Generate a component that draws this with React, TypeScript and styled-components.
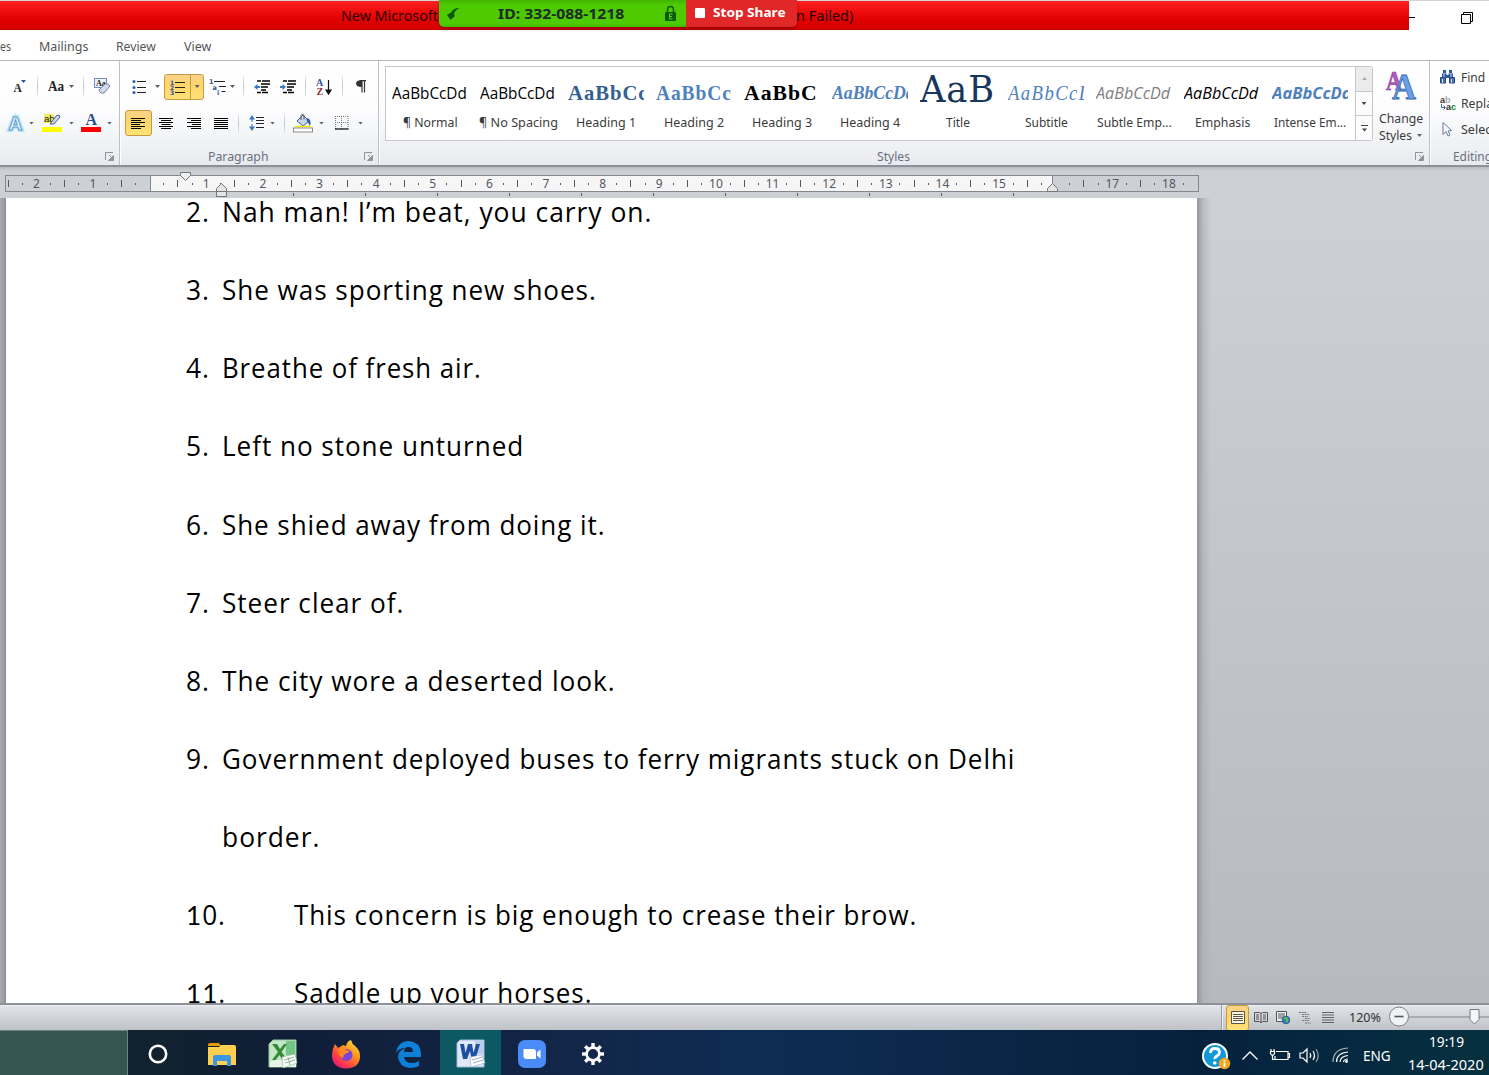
import React, { useLayoutEffect, useRef, useState } from "react";
import styled, { createGlobalStyle, css } from "styled-components";

const UI = '"Noto Sans", "Open Sans", sans-serif';
const BODY = '"Open Sans", "Noto Sans", sans-serif';
const SERIF = '"DejaVu Serif", "Liberation Serif", serif';
const BOOK_SERIF = '"Liberation Serif", "DejaVu Serif", serif';

const Global = createGlobalStyle`
  * { box-sizing: border-box; }
  body { margin: 0; overflow: hidden; background: #fff; font-family: ${UI}; font-size: 12.5px; color: #3b3b3b; }
  svg { display: block; overflow: visible; flex: none; }
`;

/* Text condensed or widened to an exact measure */
const FitBox = styled.span<{ $w: number }>`
  display: inline-block;
  flex: none;
  width: ${(p) => p.$w}px;
  white-space: pre;
`;
const FitInner = styled.span`
  display: inline-block;
  transform-origin: 0 50%;
`;
function Fit({ w, children }: { w: number; children: React.ReactNode }) {
  const ref = useRef<HTMLSpanElement>(null);
  const [k, setK] = useState(1);
  useLayoutEffect(() => {
    if (ref.current) setK(w / ref.current.offsetWidth);
  }, [w]);
  return (
    <FitBox $w={w}>
      <FitInner ref={ref} style={{ transform: `scaleX(${k})` }}>{children}</FitInner>
    </FitBox>
  );
}

const Screen = styled.div`
  position: relative;
  width: 1489px;
  height: 1075px;
  display: flex;
  flex-direction: column;
  overflow: hidden;
`;

/* ---------- title bar ---------- */
const TitleRow = styled.header`
  height: 30px;
  flex: none;
  display: flex;
  border-top: 1px solid #d4d4d4;
`;
const RedTitle = styled.div`
  width: 1409px;
  height: 29px;
  display: flex;
  align-items: center;
  padding: 2px 0 0 341px;
  background: linear-gradient(#ff2020, #ea0a0a 45%, #dc0000 75%, #d80000);
  border-bottom: 1px solid #c00000;
  color: #2c0000;
  font-size: 14px;
  line-height: 26px;
`;
const TitleGap = styled.span`
  width: 358px;
`;
const WindowButtons = styled.div`
  display: flex;
  align-items: flex-start;
  padding-top: 10px;
  gap: 46px;
`;
const ShareBar = styled.div`
  position: absolute;
  left: 439px;
  top: 0;
  height: 27px;
  display: flex;
  border-radius: 0 0 5px 5px;
  overflow: hidden;
  font-weight: 700;
  box-shadow: 0 2px 3px rgba(60, 0, 0, 0.4);
`;
const MeetingId = styled.div`
  width: 247px;
  display: flex;
  align-items: center;
  padding-left: 8px;
  background: linear-gradient(#42b400, #4dca00 5px, #4dca00 24px, #42b400);
  color: #1d2b2b;
  font-size: 13.5px;
`;
const IdText = styled.div`
  margin-left: 38px;
  width: 167px;
`;
const StopShare = styled.div`
  width: 111px;
  display: flex;
  align-items: center;
  gap: 8px;
  padding: 0 0 2px 9px;
  background: #e02828;
  color: #fff;
  font-size: 12.5px;
`;
const StopSquare = styled.i`
  width: 10px;
  height: 10px;
  border-radius: 1px;
  background: #fff;
`;

/* ---------- ribbon ---------- */
const Tabs = styled.nav`
  height: 31px;
  flex: none;
  display: flex;
  align-items: center;
  padding-top: 2px;
  border-bottom: 1px solid #b4b7bc;
  color: #555;
`;
const Space = styled.i<{ $w: number }>`
  width: ${(p) => p.$w}px;
  flex: none;
`;
const Ribbon = styled.div`
  height: 106px;
  flex: none;
  display: flex;
  background: linear-gradient(#fff, #fdfdfe 45%, #f3f5f7 70%, #e8eaef);
  border-bottom: 2px solid #8c9098;
`;
const Group = styled.section<{ $w: number }>`
  width: ${(p) => p.$w}px;
  flex: none;
  display: flex;
  flex-direction: column;
  border-right: 1px solid #bcc0c7;
  box-shadow: 1px 0 0 #fff;
  overflow: hidden;
`;
const ToolRow = styled.div<{ $h: number }>`
  height: ${(p) => p.$h}px;
  flex: none;
  display: flex;
  align-items: center;
`;
const Cell = styled.span<{ $w: number; $ml?: number }>`
  width: ${(p) => p.$w}px;
  margin-left: ${(p) => p.$ml ?? 0}px;
  flex: none;
  display: flex;
  justify-content: center;
`;
const Divider = styled.i<{ $ml: number }>`
  width: 1px;
  height: 21px;
  flex: none;
  margin-left: ${(p) => p.$ml}px;
  background: linear-gradient(#ececee, #bfc3c9, #ececee);
`;
const Caret = styled.i<{ $ml?: number; $c?: string }>`
  flex: none;
  width: 5px;
  height: 3px;
  margin-left: ${(p) => p.$ml ?? 0}px;
  background: ${(p) => p.$c ?? "#606060"};
  clip-path: polygon(0 0, 100% 0, 50% 100%);
`;
const Hot = styled.span<{ $w: number; $ml: number }>`
  width: ${(p) => p.$w}px;
  height: 26px;
  margin-left: ${(p) => p.$ml}px;
  flex: none;
  display: flex;
  align-items: center;
  justify-content: center;
  border: 1px solid #c79a3c;
  border-radius: 3px;
  background: linear-gradient(#f9d38b, #fdd668 45%, #ffe27a);
`;
const HotHalf = styled.span<{ $w: number }>`
  width: ${(p) => p.$w}px;
  height: 24px;
  display: flex;
  align-items: center;
  justify-content: center;
  & + & { border-left: 1px solid #c79a3c; }
`;
const GroupFoot = styled.footer`
  height: 20px;
  flex: none;
  display: flex;
  align-items: center;
  padding-top: 2px;
  color: #6a7080;
`;

/* ---------- styles gallery ---------- */
const GalleryRow = styled.div`
  height: 84px;
  flex: none;
  display: flex;
  padding: 5px 0 0 6px;
`;
const Gallery = styled.div`
  width: 971px;
  height: 75px;
  display: flex;
  border: 1px solid #c4c7cc;
  background: #fff;
`;
const StyleCard = styled.div`
  width: 88px;
  flex: none;
  display: flex;
  flex-direction: column;
  align-items: center;
`;
const Preview = styled.div<{ $css: ReturnType<typeof css> }>`
  width: 76px;
  height: 36px;
  margin-top: 8px;
  overflow: hidden;
  white-space: nowrap;
  line-height: 36px;
  ${(p) => p.$css}
`;
const CardName = styled.div`
  height: 22px;
  margin-top: 1px;
  line-height: 22px;
`;
const GalleryScroll = styled.div`
  width: 17px;
  height: 75px;
  display: flex;
  flex-direction: column;
  border: 1px solid #c4c7cc;
  border-left: 0;
  border-radius: 0 3px 3px 0;
`;
const ScrollButton = styled.span<{ $off?: boolean }>`
  flex: 1;
  display: flex;
  align-items: center;
  justify-content: center;
  background: ${(p) => (p.$off ? "#ececec" : "#fcfcfd")};
  & + & { border-top: 1px solid #c4c7cc; }
`;
const ChangeStyles = styled.div`
  width: 55px;
  display: flex;
  flex-direction: column;
  align-items: center;
  padding-top: 5px;
  line-height: 17px;
`;
const ChangeLabel = styled.div`
  padding-top: 9px;
`;
const Inline = styled.span`
  display: flex;
  align-items: center;
`;
const EditList = styled.div`
  height: 84px;
  flex: none;
  padding-top: 3px;
`;
const EditRow = styled.div`
  height: 26px;
  display: flex;
  align-items: center;
  padding-left: 10px;
`;

/* ---------- ruler ---------- */
const RulerBand = styled.div`
  position: relative;
  height: 31px;
  flex: none;
  padding: 8px 0 0 5px;
  background: linear-gradient(#b9bdc3, #cdd0d5 4px);
`;
const Ruler = styled.div`
  width: 1194px;
  height: 17px;
  display: flex;
  align-items: center;
  border: 1px solid #83878f;
  background: linear-gradient(90deg, #cdd0d5 144px, #83878f 144px 145px, #f6f6f7 145px 1046px, #83878f 1046px 1047px, #cdd0d5 1047px);
  color: #55585e;
  font-size: 12px;
`;
const Slot = styled.span`
  width: 14.17px;
  flex: none;
  display: flex;
  justify-content: center;
  white-space: nowrap;
  &:first-child { margin-left: -5px; }
`;
const Tick = styled.i<{ $h: number }>`
  width: 1px;
  height: ${(p) => p.$h}px;
  background: #55585e;
`;
const Num = styled.span`
  width: 0;
  display: flex;
  justify-content: center;
  line-height: 14px;
`;
const TabStops = styled.div`
  display: flex;
  gap: 71px;
  padding: 1px 0 0 288px;
`;
const Marker = styled.span<{ $x: number; $y: number }>`
  position: absolute;
  left: ${(p) => p.$x}px;
  top: ${(p) => p.$y}px;
`;

/* ---------- document ---------- */
const Canvas = styled.main`
  height: 805px;
  flex: none;
  display: flex;
  background: linear-gradient(#cdd0d5, #b6b9be);
`;
const LeftEdge = styled.div`
  width: 6px;
  background: linear-gradient(90deg, #a7aaaf, #9b9ea4 4px, #85888e);
`;
const Page = styled.article`
  width: 1191px;
  height: 805px;
  overflow: hidden;
  background: #fff;
  padding-left: 180px;
  color: #000;
  font: 27.5px ${BODY};
  letter-spacing: 1px;
`;
const RightEdge = styled.div`
  width: 14px;
  background: linear-gradient(90deg, #93969d, rgba(170, 173, 178, 0.6) 6px, transparent);
`;
const Line = styled.div`
  height: 78.12px;
  line-height: 78.12px;
  display: flex;
  &:first-child { margin-top: -24.9px; }
`;
const LineNo = styled.span<{ $w: number }>`
  width: ${(p) => p.$w}px;
  flex: none;
`;
const FootedOne = styled.span`
  font-family: Lato, ${BODY};
`;

/* ---------- status bar ---------- */
const Status = styled.div`
  height: 27px;
  flex: none;
  display: flex;
  align-items: center;
  padding-left: 1221px;
  border-top: 2px solid #8d919a;
  background: linear-gradient(#eceff2, #dfe2e6 2px, #bfc2c7);
  color: #333;
`;
const StatusSep = styled.i`
  width: 2px;
  height: 25px;
  background: #9a9da3;
  border-right: 1px solid #eee;
`;

/* ---------- taskbar ---------- */
const Taskbar = styled.div`
  height: 45px;
  flex: none;
  display: flex;
  align-items: center;
  background: linear-gradient(90deg, #11222e 128px, #101e38 300px, #12274a 600px, #0e2c54 760px, #0a2646 1000px, #06213c 1200px, #052a40 1370px, #06303e);
  color: #fff;
`;
const SearchBlock = styled.div`
  width: 128px;
  height: 45px;
  border: solid #6b8582;
  border-width: 1px 1px 0 0;
  background: #345551;
`;
const TaskButton = styled.div<{ $w: number; $on?: boolean }>`
  width: ${(p) => p.$w}px;
  height: 45px;
  padding-top: 3px;
  display: flex;
  align-items: center;
  justify-content: center;
  background: ${(p) => (p.$on ? "#0c5863" : "transparent")};
`;
const Tray = styled.div`
  margin-left: auto;
  height: 45px;
  display: flex;
  align-items: center;
  padding-top: 5px;
  font-size: 14.5px;
`;
const Clock = styled.div`
  display: flex;
  flex-direction: column;
  align-items: center;
  width: 86px;
  height: 46px;
  margin: -4px 0 0 1px;
  line-height: 23px;
`;

/* ---------- small drawings ---------- */
const Launcher = () => (
  <svg width="9" height="9" fill="none" stroke="#8f939a">
    <path d="M.5 8V.5H8M4 3l3 3" />
    <path d="M3.5 8.5h5v-5z" fill="#8f939a" />
  </svg>
);
const Lines = ({ a }: { a: "l" | "c" | "r" | "j" }) => (
  <svg width="15" height="13" stroke="#000">
    {[14, 10, 14, 9, 14, 10].map((w0, i) => {
      const w = a === "j" ? 14 : w0;
      const x = a === "r" ? 14 - w : a === "c" ? (14 - w) / 2 : 0;
      return <path key={i} d={`M${x} ${i * 2 + 1.5}h${w}`} strokeWidth="1" />;
    })}
  </svg>
);
const Bullets = () => (
  <svg width="14" height="14">
    {[1.5, 7.5, 12.5].map((y) => (
      <g key={y}>
        <circle cx="2" cy={y} r="1.500" fill="#2f5bb0" />
        <path d={`M5 ${y}h9`} stroke="#222" />
      </g>
    ))}
  </svg>
);
const Numbering = () => (
  <svg width="15" height="14" fontFamily="DejaVu Sans, sans-serif" fontSize="6" fontWeight="700" fill="#2c50a0">
    {[1, 2, 3].map((n) => (
      <g key={n}>
        <text x="0" y={n * 5 - 0.5}>{n}</text>
        <path d={`M5 ${n * 5 - 2.5}h10`} stroke="#222" />
      </g>
    ))}
  </svg>
);
const Multi = () => (
  <svg width="17" height="16" fontFamily="DejaVu Sans, sans-serif" fontSize="6.500" fontWeight="700" fill="#2c50a0">
    <text x="0" y="5">1</text>
    <text x="3.500" y="10.500">a</text>
    <text x="8" y="16">i</text>
    <path d="M5 2.500h11M10 7.500h7M12.500 12.500h4" stroke="#222" />
  </svg>
);
const Indent = ({ out }: { out?: boolean }) => (
  <svg width="17" height="14">
    <path d="M3 1h4M8 1h8M7 4h9M7 7h7M7 10h5M3 12.500h4M8 12.500h6" stroke="#000" strokeWidth="1.700" />
    <path d={out ? "M0 7l3.500-3v2H6v2H3.500v2z" : "M6 7L2.500 4v2H0v2h2.500v2z"} fill="#3d78c8" />
  </svg>
);
const Sort = () => (
  <svg width="16" height="16" fontFamily="Liberation Serif, serif" fontSize="10" fontWeight="700">
    <text x="0" y="7" fill="#2c55a8">A</text>
    <text x="0.500" y="15.500" fill="#8c2f2f">Z</text>
    <path d="M12.500 1v13M10 11l2.500 4 2.500-4z" stroke="#111" strokeWidth="1.200" fill="#111" />
  </svg>
);
const Spacing = () => (
  <svg width="16" height="16">
    <path d="M3 3v10" stroke="#2f66b8" strokeDasharray="4 2" />
    <path d="M0 4.500L3 0l3 4.500zM0 11.500L3 16l3-4.500z" fill="#3d78c8" />
    <path d="M7 2.500h8M7 5.500h8M7 8.500h8M7 12.500h8" stroke="#222" />
  </svg>
);
const Shading = () => (
  <svg width="20" height="18">
    <path d="M4 7l6-6 6 6-6 5z" fill="#c9d6ea" stroke="#40608f" />
    <path d="M8 6V1.500q1.500-3 3 0v4" fill="none" stroke="#555" />
    <path d="M13 4q6 0 4 8l-3-5z" fill="#2b5fae" />
    <path d="M2 12.500h16" stroke="#f6ef00" strokeWidth="1.500" />
    <rect x=".5" y="14" width="19" height="4" fill="#fff" stroke="#8a8a8a" />
  </svg>
);
const Borders = () => (
  <svg width="14" height="14">
    <path d="M.5 0v13M13 0v13M6.500 0v13M0 .5h14M0 6.500h14" stroke="#777" strokeDasharray="1 1" />
    <path d="M0 13h13.500" stroke="#111" strokeWidth="1.300" />
  </svg>
);
const ShrinkFont = () => (
  <svg width="14" height="15" fontFamily="Liberation Serif, serif" fontWeight="700">
    <text x="0.500" y="13" fontSize="11.500" fill="#222">A</text>
    <path d="M8 1h5l-2.500 3z" fill="#2c55a8" />
  </svg>
);
const CaseText = styled.span`
  font: 700 14px "Liberation Serif", serif;
  color: #222;
`;
const ClearFmt = () => (
  <svg width="17" height="17">
    <rect x=".5" y=".5" width="12" height="9" fill="#eef3fb" stroke="#6f8fc0" />
    <text x="2" y="8" fontFamily="Liberation Serif, serif" fontWeight="700" fontSize="8" fill="#222">Aa</text>
    <path d="M5 12l6-6q3-1 5 2l-6 7q-4 1-5-3z" fill="#d4dcec" stroke="#6b80a8" />
  </svg>
);
const OutlineA = () => (
  <svg width="17" height="17" fontFamily="Liberation Sans, sans-serif" fontWeight="700">
    <text x="1.500" y="14.500" fontSize="19" fill="#fff" stroke="#b4e2f6" strokeWidth="4">A</text>
    <text x="1.500" y="14.500" fontSize="19" fill="#fff" stroke="#5c9bd0" strokeWidth="1">A</text>
  </svg>
);
const Highlight = () => (
  <svg width="20" height="18">
    <rect x="2" y="0" width="10" height="9" fill="#f1ee6a" />
    <text x="2" y="8" fontFamily="Liberation Sans, sans-serif" fontSize="9.500" fill="#111">ab</text>
    <path d="M8 10l6-8 3-1 1 2-6 7z" fill="#c8d3e8" stroke="#51658d" />
    <rect y="13" width="20" height="5" fill="#ff0" />
  </svg>
);
const FontColor = () => (
  <svg width="20" height="18">
    <text x="4.500" y="11" fontFamily="Liberation Serif, serif" fontWeight="700" fontSize="16" fill="#294f91">A</text>
    <rect y="13" width="20" height="5" fill="#f00" />
  </svg>
);
const BigAA = () => (
  <svg width="30" height="30" fontFamily="Liberation Serif, serif" fontWeight="700">
    <text x="0" y="19" fontSize="28" textLength="16" lengthAdjust="spacingAndGlyphs" fill="#b25fc4" stroke="#8b3c9c" strokeWidth=".7">A</text>
    <text x="6" y="28" fontSize="36" textLength="24" lengthAdjust="spacingAndGlyphs" fill="#6a9fe8" stroke="#3767b0" strokeWidth=".8">A</text>
  </svg>
);
const Binoculars = () => (
  <svg width="15" height="14" fill="#2d5796">
    <path d="M3 0h3v3H3zM9 0h3v3H9zM2 3.500h4.500v4H2zM8.500 3.500H13v4H8.500zM6 5h3v3H6z" />
    <path d="M.5 7.500h5v5.500h-5zM9.500 7.500h5v5.500h-5z" fill="#456fae" stroke="#234680" />
    <path d="M2.500 9v4M11.500 9v4M4 4v3M11 4v3" stroke="#c9dcf5" />
  </svg>
);
const ReplaceIcon = () => (
  <svg width="16" height="15" fontFamily="Liberation Sans, sans-serif" fontWeight="700" fontSize="9">
    <text x="0" y="7" fill="#333">a<tspan fill="#aaa">b</tspan></text>
    <text x="6" y="14" fill="#333">a<tspan fill="#178a28">c</tspan></text>
    <path d="M1.500 8v3.500h4M3.500 9.500l2 2-2 2" fill="none" stroke="#3568b4" />
  </svg>
);
const Cursor = () => (
  <svg width="10" height="15">
    <path d="M1 .5v12l3-3 2 4.500 2-1-2-4 3.500-.5z" fill="#fff" stroke="#62779b" />
  </svg>
);
const ArrowMark = () => (
  <svg width="13" height="12">
    <path d="M12.500 0Q6 0 4.500 4L0 7l3.500 5L8 8l-1-2q1-4 5.500-6z" fill="#0c5b0c" />
  </svg>
);
const Lock = () => (
  <svg width="11" height="15">
    <path d="M2.500 7V4q0-3.500 3-3.500t3 3.500v3" fill="none" stroke="#0c5b0c" strokeWidth="1.500" />
    <rect y="6" width="11" height="9" rx="1" fill="#0c5b0c" />
    <path d="M7.500 8h-3v5h3M4.500 10.500H7" fill="none" stroke="#5bd41a" />
  </svg>
);

const Down = () => (
  <svg width="11" height="9"><path d="M.5.5h10v3L5.500 8.500l-5-5z" fill="#eee" stroke="#777" /></svg>
);
const Up = ({ base }: { base?: boolean }) => (
  <svg width="11" height="15" fill="#e4e4e4" stroke="#777">
    <path d="M.5 8.500V5.500l5-5 5 5v3z" />
    {base && <rect x=".5" y="8.500" width="10" height="5" />}
  </svg>
);

const ViewIcon = ({ kind }: { kind: "page" | "book" | "web" | "outline" | "draft" }) => (
  <svg width="14" height="13" fill="none" stroke="#555">
    {kind === "page" && <path d="M.5.5h13v12H.5zM2 3.500h10M2 5.500h10M2 7.500h10M2 9.500h10" fill="#fff8d8" />}
    {kind === "book" && <path d="M.5 1.500h5l1.500 1 1.500-1h5v9h-5L7 12l-1.500-1.500h-5zM7 2v10M2 4h3M2 6h3M2 8h3M9 4h3M9 6h3M9 8h3" />}
    {kind === "web" && (
      <>
        <path d="M.5.5h10v10H.5zM2 3h7M2 5h7M2 7h5" fill="#eee" />
        <circle cx="10" cy="9" r="3.800" fill="#2f7bbd" stroke="#2b6196" />
        <path d="M8 8q2-2 3 0t-1 3" stroke="#63c04b" strokeWidth="2" />
      </>
    )}
    {kind === "outline" && <path d="M1 1.500h8M4 3.500h7M4 5.500h6M7 7.500h5M4 9.500h7M7 12h6" stroke="#777" strokeDasharray="2 .6" />}
    {kind === "draft" && <path d="M1 1.500h12M1 4h12M1 6.500h12M1 9h12M1 11.500h12" stroke="#666" />}
  </svg>
);

/* ---------- taskbar drawings ---------- */
const Folder = () => (
  <svg width="28" height="23">
    <path d="M0 2q0-2 2-2h9l2 3H0z" fill="#e39b08" />
    <path d="M0 4h11l2-2h13q2 0 2 2v18H0z" fill="#ffcf50" />
    <path d="M5 23V14q0-2 2-2h14q2 0 2 2v9h-4v-5H9v5z" fill="#3b96df" />
  </svg>
);
const Excel = () => (
  <svg width="28" height="28">
    <path d="M4 0h23v27H0V4z" fill="#c3e6c8" stroke="#8ecb96" />
    <path d="M17 1h9v14h-9z" fill="#71c585" />
    <path d="M1 21L10 20l17 2v5H1z" fill="#e6f5e6" />
    <path d="M3 4h5l3 5 4-5h3l-5.500 8 6 8h-5l-3-5-4 5H3l6-8z" fill="#358a35" />
    <path d="M13 17l13-3 2 9-14 5z" fill="#fff" stroke="#8fb391" strokeWidth=".6" />
    <path d="M15 20l10-3M16 23l10-3M19 17l2 8" stroke="#8fb391" />
  </svg>
);
const Firefox = () => (
  <svg width="28" height="29">
    <defs>
      <linearGradient id="fx" x1="1" y1="0" x2=".2" y2="1">
        <stop offset="0" stopColor="#fff14a" /><stop offset=".4" stopColor="#ff9a1f" />
        <stop offset=".7" stopColor="#ff4a3d" /><stop offset="1" stopColor="#e3147c" />
      </linearGradient>
    </defs>
    <path d="M3 4l3 4 5-3 3 1q1-5 5-6 1 4 4 6 5 4 5 10 0 12-14 12.500Q0 28 0 15 0 9 3 4z" fill="url(#fx)" />
    <circle cx="14.500" cy="15" r="6" fill="#7a44d8" />
    <path d="M6 9q5-2 8 1 4 0 3 2l-4 2q-3 2-1 4-5 0-6-9z" fill="#ff8a22" />
  </svg>
);
const Edge = () => (
  <svg width="25" height="27">
    <path d="M0 12Q2 0 13 0q11 1 12 12v4H8q1 6 8 6 4 0 7-2v5q-4 2-9 2Q3 26 2 16q0-6 7-9Q3 7 0 12zM8 11h9q0-5-4.500-5T8 11z" fill="#0f80d8" />
  </svg>
);
const Word = () => (
  <svg width="28" height="28">
    <path d="M3 0h24v27H0V3z" fill="#dfe8f6" stroke="#9fb7dc" />
    <path d="M18 1h8v13h-8z" fill="#b9cdea" />
    <path d="M3 4h4l1.500 9L11 4h4l1.500 9L19 4h4l-4.500 15h-4L13 11l-3 8H6z" fill="#1d4fa3" />
    <path d="M13 17l12-2 3 8-14 4z" fill="#fff" stroke="#9aa9c4" strokeWidth=".6" />
    <path d="M15 20l10-3M16 23l10-3" stroke="#9aa9c4" />
  </svg>
);
const Zoom = () => (
  <svg width="28" height="28">
    <rect width="28" height="28" rx="7" fill="#4a8cf7" />
    <path d="M5.500 9H15q3 0 3 3v7H8.500q-3 0-3-3z" fill="#fff" />
    <path d="M19 12.500l3.500-3v9l-3.500-3z" fill="#fff" />
  </svg>
);
const Gear = () => (
  <svg width="22" height="22" viewBox="-11 -11 22 22" fill="none" stroke="#fff">
    <circle r="6.400" strokeWidth="2.600" />
    {[0, 45, 90, 135, 180, 225, 270, 315].map((a) => (
      <path key={a} d="M0-7v-4" strokeWidth="3.400" transform={`rotate(${a})`} />
    ))}
  </svg>
);
const Help = () => (
  <svg width="29" height="27">
    <circle cx="13" cy="14" r="12" fill="#0f97d8" stroke="#fff" strokeWidth="2" />
    <path d="M8.500 11q0-4.500 4.500-4.500t4.500 4q0 2-2.500 3.500t-2 3" fill="none" stroke="#fff" strokeWidth="2.800" />
    <circle cx="12.800" cy="21" r="1.800" fill="#fff" />
    <circle cx="22.500" cy="21.500" r="5.800" fill="#f2a51e" />
    <path d="M22.500 18v1.500M22.500 20.500v4.500" stroke="#fff" strokeWidth="1.800" />
  </svg>
);
const Battery = () => (
  <svg width="20" height="14" fill="none" stroke="#fff" strokeWidth="1.200">
    <path d="M6 3.500h12v8H5V8M18 5.500h1.500v4H18M1 1v2M4 1v2M.5 3.500h4v2l-1 1.500h-2L.5 5.500zM2.500 7v4.500H5" />
  </svg>
);
const Speaker = () => (
  <svg width="21" height="17" fill="none" stroke="#fff" strokeWidth="1.200">
    <path d="M1 6h3l4-4v13l-4-4H1zM11 6q1.500 2.500 0 5M14 4q3 4.500 0 9" />
    <path d="M17 2q4.500 6.500 0 13" stroke="#8d9bab" />
  </svg>
);
const Wifi = () => (
  <svg width="17" height="16" fill="none" stroke="#fff" strokeWidth="1.200">
    <path d="M1 15Q1 2 16 1" stroke="#a7b3c0" />
    <path d="M4.500 15q0-9 11.500-10M8 15q0-5.500 8-6.500M11.500 15q0-2.500 4.500-3" />
    <circle cx="14.500" cy="14.500" r=".8" fill="#fff" />
  </svg>
);

/* ---------- data ---------- */
const styleCards = [
  { name: "¶ Normal", w: 55, text: "AaBbCcDd", tw: 75, s: css`font: 15.500px/36px ${BODY}; color: #000;` },
  { name: "¶ No Spacing", w: 79, text: "AaBbCcDd", tw: 75, s: css`font: 15.500px/36px ${BODY}; color: #000;` },
  { name: "Heading 1", w: 60, text: "AaBbCc", tw: 80, s: css`font: 700 22px/36px ${BOOK_SERIF}; letter-spacing: 1px; color: #365f91;` },
  { name: "Heading 2", w: 60, text: "AaBbCc", tw: 76, s: css`font: 700 21.500px/36px ${BOOK_SERIF}; letter-spacing: 1px; color: #4f81bd;` },
  { name: "Heading 3", w: 60, text: "AaBbC", tw: 74, s: css`font: 700 22px/35px ${BOOK_SERIF}; letter-spacing: 1px; color: #000;` },
  { name: "Heading 4", w: 60, text: "AaBbCcDd", tw: 83, s: css`font: italic 700 19px/36px ${BOOK_SERIF}; color: #4f81bd;` },
  { name: "Title", w: 24, text: "AaB", tw: 75, s: css`font: 38px/28px ${SERIF}; letter-spacing: 1px; color: #17365d;` },
  { name: "Subtitle", w: 43, text: "AaBbCcD", tw: 86, s: css`font: italic 20px/36px ${BOOK_SERIF}; letter-spacing: 1.500px; color: #4f81bd;` },
  { name: "Subtle Emp...", w: 75, text: "AaBbCcDd", tw: 74, s: css`font: italic 15.500px/36px ${BODY}; color: #808080;` },
  { name: "Emphasis", w: 55, text: "AaBbCcDd", tw: 74, s: css`font: italic 15.500px/36px ${BODY}; color: #000;` },
  { name: "Intense Em...", w: 72, text: "AaBbCcDd", tw: 79, s: css`font: italic 700 15.500px/36px ${BODY}; color: #4f81bd;` },
];

const lines: { n?: React.ReactNode; nw?: number; x: number; t: string; w: number }[] = [
  { n: "2.", nw: 24, x: 36, t: "Nah man! I’m beat, you carry on.", w: 430 },
  { n: "3.", nw: 24, x: 36, t: "She was sporting new shoes.", w: 375 },
  { n: "4.", nw: 24, x: 36, t: "Breathe of fresh air.", w: 260 },
  { n: "5.", nw: 24, x: 36, t: "Left no stone unturned", w: 302 },
  { n: "6.", nw: 24, x: 36, t: "She shied away from doing it.", w: 384 },
  { n: "7.", nw: 24, x: 36, t: "Steer clear of.", w: 182 },
  { n: "8.", nw: 24, x: 36, t: "The city wore a deserted look.", w: 394 },
  { n: "9.", nw: 24, x: 36, t: "Government deployed buses to ferry migrants stuck on Delhi", w: 793 },
  { x: 36, t: "border.", w: 98 },
  { n: <><FootedOne>1</FootedOne>0.</>, nw: 40, x: 108, t: "This concern is big enough to crease their brow.", w: 623 },
  { n: <><FootedOne>11</FootedOne>.</>, nw: 40, x: 108, t: "Saddle up your horses.", w: 298 },
];

const rulerSlot = (k: number) => {
  if (k === 10 || k === 74) return null;
  const r = k % 4;
  if (r === 2) return <Num><span>{Math.abs((k - 10) / 4)}</span></Num>;
  return <Tick $h={r === 0 ? 7 : 2} />;
};

export default function WordWindow() {
  return (
    <Screen>
      <Global />
      <TitleRow>
        <RedTitle>
          <Fit w={97}>New Microsoft</Fit>
          <TitleGap />
          <Fit w={57}>n Failed)</Fit>
        </RedTitle>
        <WindowButtons>
          <svg width="6" height="12"><path d="M0 6.500h6" stroke="#000" /></svg>
          <svg width="12" height="13" fill="none" stroke="#000"><path d="M.5 3.500h9v9h-9zM2.500 3.500v-2h9v9h-2" /></svg>
        </WindowButtons>
      </TitleRow>
      <ShareBar>
        <MeetingId>
          <ArrowMark />
          <IdText><Fit w={126}>ID: 332-088-1218</Fit></IdText>
          <Lock />
        </MeetingId>
        <StopShare><StopSquare /><Fit w={73}>Stop Share</Fit></StopShare>
      </ShareBar>

      <Tabs>
        <Fit w={11}>es</Fit><Space $w={28} />
        <Fit w={49}>Mailings</Fit><Space $w={28} />
        <Fit w={40}>Review</Fit><Space $w={28} />
        <Fit w={27}>View</Fit>
      </Tabs>

      <Ribbon>
        <Group $w={120}>
          <ToolRow $h={51}>
            <Cell $w={14} $ml={13}><ShrinkFont /></Cell>
            <Divider $ml={10} />
            <Cell $w={16} $ml={10}><CaseText><Fit w={16}>Aa</Fit></CaseText></Cell>
            <Caret $ml={5} />
            <Divider $ml={9} />
            <Cell $w={17} $ml={10}><ClearFmt /></Cell>
          </ToolRow>
          <ToolRow $h={22}>
            <Cell $w={17} $ml={7}><OutlineA /></Cell><Caret $ml={5} />
            <Cell $w={20} $ml={8}><Highlight /></Cell><Caret $ml={7} />
            <Cell $w={20} $ml={7}><FontColor /></Cell><Caret $ml={6} />
          </ToolRow>
          <ToolRow $h={11} />
          <GroupFoot><Space $w={105} /><Launcher /></GroupFoot>
        </Group>

        <Group $w={259}>
          <ToolRow $h={51}>
            <Cell $w={14} $ml={12}><Bullets /></Cell><Caret $ml={9} />
            <Hot $w={40} $ml={4}>
              <HotHalf $w={26}><Numbering /></HotHalf>
              <HotHalf $w={13}><Caret /></HotHalf>
            </Hot>
            <Cell $w={17} $ml={5}><Multi /></Cell><Caret $ml={4} />
            <Divider $ml={8} />
            <Cell $w={17} $ml={10}><Indent out /></Cell>
            <Cell $w={17} $ml={9}><Indent /></Cell>
            <Divider $ml={8} />
            <Cell $w={16} $ml={10}><Sort /></Cell>
            <Divider $ml={10} />
            <Cell $w={12} $ml={12}>
              <svg width="10" height="13"><path d="M6 .5v12M8.500 .5v12M4 .6h6" stroke="#333" strokeWidth="1.200" /><path d="M6 0v7Q0 7 0 3.500T6 0z" fill="#333" /></svg>
            </Cell>
          </ToolRow>
          <ToolRow $h={22}>
            <Hot $w={27} $ml={5}><Lines a="l" /></Hot>
            <Cell $w={15} $ml={7}><Lines a="c" /></Cell>
            <Cell $w={15} $ml={13}><Lines a="r" /></Cell>
            <Cell $w={15} $ml={12}><Lines a="j" /></Cell>
            <Divider $ml={9} />
            <Cell $w={16} $ml={10}><Spacing /></Cell><Caret $ml={5} />
            <Divider $ml={9} />
            <Cell $w={20} $ml={8}><Shading /></Cell><Caret $ml={6} />
            <Cell $w={14} $ml={11}><Borders /></Cell><Caret $ml={9} />
          </ToolRow>
          <ToolRow $h={11} />
          <GroupFoot>
            <Space $w={88} /><Fit w={61}>Paragraph</Fit><Space $w={95} /><Launcher />
          </GroupFoot>
        </Group>

        <Group $w={1051}>
          <GalleryRow>
            <Gallery>
              {styleCards.map((c) => (
                <StyleCard key={c.name}>
                  <Preview $css={c.s}><Fit w={c.tw}>{c.text}</Fit></Preview>
                  <CardName><Fit w={c.w}>{c.name}</Fit></CardName>
                </StyleCard>
              ))}
            </Gallery>
            <GalleryScroll>
              <ScrollButton $off><svg width="5" height="3"><path d="M0 3h5L2.500 0z" fill="#aaa" /></svg></ScrollButton>
              <ScrollButton><Caret $c="#444" /></ScrollButton>
              <ScrollButton><svg width="7" height="7"><path d="M0 .5h7" stroke="#444" /><path d="M1 3.500h5L3.500 6.500z" fill="#444" /></svg></ScrollButton>
            </GalleryScroll>
            <ChangeStyles>
              <BigAA />
              <ChangeLabel><Fit w={44}>Change</Fit></ChangeLabel>
              <Inline><Fit w={33}>Styles</Fit><Caret $ml={5} /></Inline>
            </ChangeStyles>
          </GalleryRow>
          <GroupFoot>
            <Space $w={498} /><Fit w={33}>Styles</Fit><Space $w={505} /><Launcher />
          </GroupFoot>
        </Group>

        <Group $w={80}>
          <EditList>
            <EditRow><Binoculars /><Space $w={6} /><Fit w={24}>Find</Fit></EditRow>
            <EditRow><ReplaceIcon /><Space $w={5} /><Fit w={45}>Replace</Fit></EditRow>
            <EditRow><Space $w={2} /><Cursor /><Space $w={9} /><Fit w={35}>Select</Fit></EditRow>
          </EditList>
          <GroupFoot><Space $w={23} /><Fit w={39}>Editing</Fit></GroupFoot>
        </Group>
      </Ribbon>

      <RulerBand>
        <Ruler>
          {Array.from({ length: 84 }, (_, k) => <Slot key={k}>{rulerSlot(k)}</Slot>)}
        </Ruler>
        <TabStops>
          {Array.from({ length: 11 }, (_, i) => <Tick key={i} $h={3} />)}
        </TabStops>
        <Marker $x={180} $y={5}><Down /></Marker>
        <Marker $x={216} $y={16}><Up base /></Marker>
        <Marker $x={1047} $y={16}><Up /></Marker>
      </RulerBand>

      <Canvas>
        <LeftEdge />
        <Page>
          {lines.map((l) => (
            <Line key={l.t}>
              <LineNo $w={l.x}>{l.n && <Fit w={l.nw!}>{l.n}</Fit>}</LineNo>
              <Fit w={l.w}>{l.t}</Fit>
            </Line>
          ))}
        </Page>
        <RightEdge />
      </Canvas>

      <Status>
        <StatusSep />
        <Hot $w={23} $ml={3}><ViewIcon kind="page" /></Hot>
        <Cell $w={14} $ml={5}><ViewIcon kind="book" /></Cell>
        <Cell $w={14} $ml={8}><ViewIcon kind="web" /></Cell>
        <Cell $w={14} $ml={8}><ViewIcon kind="outline" /></Cell>
        <Cell $w={14} $ml={9}><ViewIcon kind="draft" /></Cell>
        <Space $w={14} />
        <Fit w={32}>120%</Fit>
        <Space $w={8} />
        <svg width="100" height="24" fill="none">
          <path d="M20 11h80" stroke="#80848b" />
          <circle cx="10" cy="10.500" r="9.500" fill="#f1f2f4" stroke="#7c8087" />
          <path d="M5.500 10.500h9" stroke="#555" strokeWidth="1.600" />
          <path d="M81 3.500h9v10l-4.500 4.500-4.500-4.500z" fill="#f6f7f8" stroke="#777b82" />
        </svg>
      </Status>

      <Taskbar>
        <SearchBlock />
        <TaskButton $w={60}><svg width="20" height="20"><circle cx="10" cy="10" r="8.200" fill="none" stroke="#fff" strokeWidth="2.600" /></svg></TaskButton>
        <TaskButton $w={67}><Folder /></TaskButton>
        <TaskButton $w={56}><Excel /></TaskButton>
        <TaskButton $w={69}><Firefox /></TaskButton>
        <TaskButton $w={56}><Edge /></TaskButton>
        <Space $w={4} />
        <TaskButton $w={61} $on><Word /></TaskButton>
        <TaskButton $w={61}><Zoom /></TaskButton>
        <TaskButton $w={62}><Gear /></TaskButton>
        <Tray>
          <Help />
          <Space $w={11} />
          <svg width="16" height="9"><path d="M.5 8.500L8 1l7.500 7.500" fill="none" stroke="#fff" strokeWidth="1.300" /></svg>
          <Space $w={12} />
          <Battery />
          <Space $w={9} />
          <Speaker />
          <Space $w={12} />
          <Wifi />
          <Space $w={14} />
          <Fit w={28}>ENG</Fit>
          <Space $w={11} />
          <Clock><Fit w={35}>19:19</Fit><Fit w={76}>14-04-2020</Fit></Clock>
        </Tray>
      </Taskbar>
    </Screen>
  );
}
